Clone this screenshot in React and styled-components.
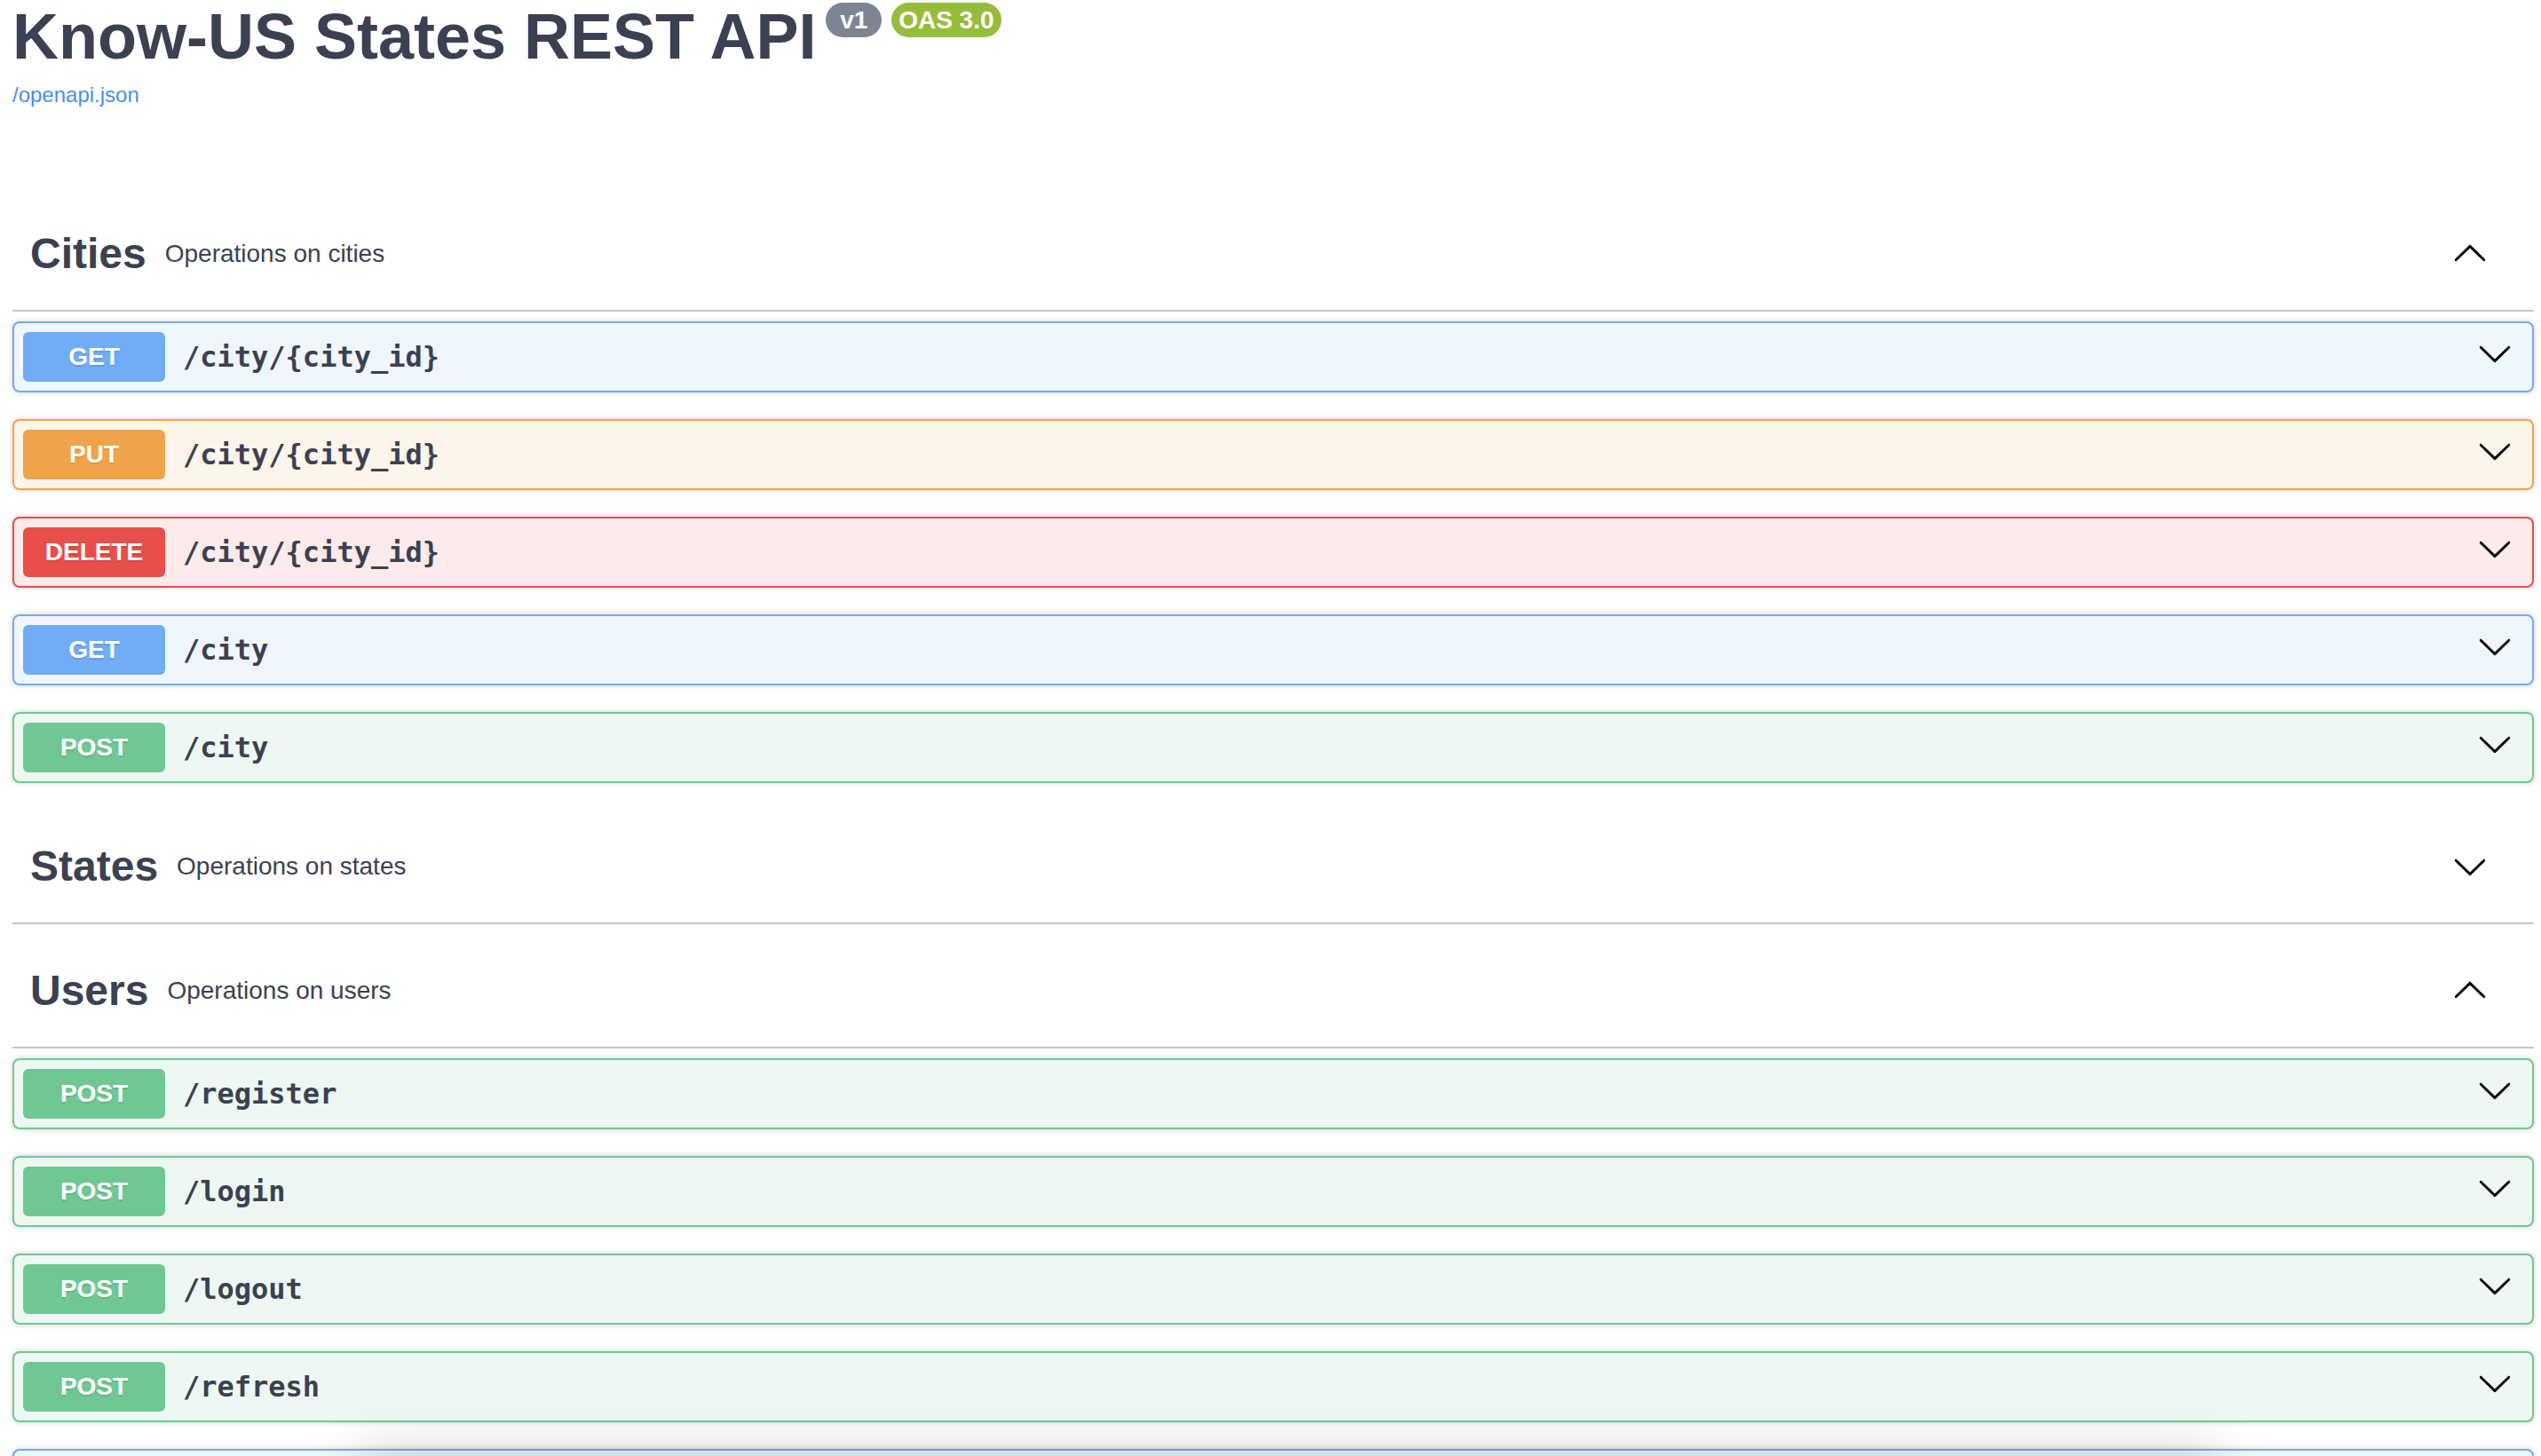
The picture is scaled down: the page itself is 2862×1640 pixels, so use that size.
import styled, { createGlobalStyle } from "styled-components";

const GlobalStyle = createGlobalStyle`
  html, body {
    margin: 0;
    padding: 0;
    background: #fff;
    font-family: "Liberation Sans", Arial, sans-serif;
    color: #3b4151;
  }
`;

const METHOD_COLORS = {
  GET: { main: "#71acf6", bg: "#eff6fe" },
  PUT: { main: "#f0a44a", bg: "#fdf4ea" },
  DELETE: { main: "#e74f4a", bg: "#fbebea" },
  POST: { main: "#6fc893", bg: "#eef8f2" },
};

const Wrapper = styled.div`
  padding: 0 8px 0 14px;
  width: 2840px;
`;

const Info = styled.div`
  margin-bottom: 101px;
`;

const TitleRow = styled.div`
  display: flex;
  align-items: flex-start;
`;

const Title = styled.h2`
  margin: 0;
  font-size: 72px;
  line-height: 82px;
  font-weight: 700;
  color: #3b4151;
`;

const Badge = styled.small`
  display: inline-block;
  margin: 3px 0 0 11px;
  padding: 4px 8px;
  border-radius: 57px;
  background: ${(p) => p.$bg};
  color: #fff;
  font-size: 28px;
  line-height: 31px;
  font-weight: 700;
  white-space: pre;
`;

const SpecLink = styled.a`
  display: block;
  margin-top: 11px;
  font-size: 24px;
  line-height: 28px;
  color: #4b8fe2;
  text-decoration: none;
`;

const TagHeader = styled.div`
  display: flex;
  align-items: center;
  box-sizing: border-box;
  height: 129px;
  padding: 0 52px 0 20px;
  margin-bottom: 11px;
  border-bottom: 2px solid rgba(59, 65, 81, 0.3);
`;

const TagName = styled.span`
  font-size: 48px;
  line-height: 48px;
  font-weight: 700;
  color: #3b4151;
`;

const TagDesc = styled.small`
  margin-left: 21px;
  font-size: 28px;
  line-height: 32px;
  color: #3b4151;
`;

const Chevron = styled.svg`
  width: 40px;
  height: 40px;
  flex: none;
  margin-left: auto;
  transform: ${(p) => (p.$up ? "rotate(180deg)" : "none")};
`;

const OpBlock = styled.div`
  display: flex;
  align-items: center;
  box-sizing: border-box;
  height: 80px;
  padding: 10px;
  margin-bottom: 30px;
  border: 2px solid ${(p) => METHOD_COLORS[p.$method].main};
  border-radius: 8px;
  background: ${(p) => METHOD_COLORS[p.$method].bg};
  box-shadow: 0 0 6px rgba(0, 0, 0, 0.19);
`;

const Method = styled.span`
  flex: none;
  width: 160px;
  height: 56px;
  line-height: 56px;
  border-radius: 6px;
  background: ${(p) => METHOD_COLORS[p.$method].main};
  color: #fff;
  font-size: 28px;
  font-weight: 700;
  text-align: center;
  text-shadow: 0 2px 0 rgba(0, 0, 0, 0.1);
`;

const Path = styled.span`
  padding: 0 20px;
  font-family: "DejaVu Sans Mono", "Liberation Mono", monospace;
  font-size: 32px;
  font-weight: 700;
  color: #3b4151;
`;

const OpChevron = styled(Chevron)`
  margin-right: 12px;
  margin-bottom: 9px;
`;

const BottomShade = styled.div`
  position: fixed;
  left: 430px;
  width: 2040px;
  top: 1662px;
  height: 120px;
  box-shadow: 0 0 60px 26px rgba(0, 0, 0, 0.18);
  background: #fff;
`;

const ARROW =
  "M17.418 6.109c.272-.268.709-.268.979 0s.271.701 0 .969l-7.908 7.83c-.27.268-.707.268-.979 0l-7.908-7.83c-.27-.268-.27-.701 0-.969.271-.268.709-.268.979 0L10 13.25l7.418-7.141z";

const sections = [
  {
    name: "Cities",
    desc: "Operations on cities",
    open: true,
    ops: [
      ["GET", "/city/{city_id}"],
      ["PUT", "/city/{city_id}"],
      ["DELETE", "/city/{city_id}"],
      ["GET", "/city"],
      ["POST", "/city"],
    ],
  },
  { name: "States", desc: "Operations on states", open: false, ops: [] },
  {
    name: "Users",
    desc: "Operations on users",
    open: true,
    ops: [
      ["POST", "/register"],
      ["POST", "/login"],
      ["POST", "/logout"],
      ["POST", "/refresh"],
      ["GET", "/user"],
    ],
  },
];

const Arrow = ({ as: Comp = Chevron, up }) => (
  <Comp $up={up} viewBox="0 0 20 20" aria-hidden="true">
    <path d={ARROW} fill="#000" />
  </Comp>
);

export default function App() {
  return (
    <>
      <GlobalStyle />
      <Wrapper>
        <Info>
          <TitleRow>
            <Title>Know-US States REST API</Title>
            <Badge $bg="#7d8492">{" v1 "}</Badge>
            <Badge $bg="#95bd3b">OAS 3.0</Badge>
          </TitleRow>
          <SpecLink href="#">/openapi.json</SpecLink>
        </Info>

        {sections.map((s) => (
          <section key={s.name}>
            <TagHeader>
              <TagName>{s.name}</TagName>
              <TagDesc>{s.desc}</TagDesc>
              <Arrow up={s.open} />
            </TagHeader>
            {s.ops.map(([method, path], i) => (
              <OpBlock key={i} $method={method}>
                <Method $method={method}>{method}</Method>
                <Path>{path}</Path>
                <Arrow as={OpChevron} />
              </OpBlock>
            ))}
          </section>
        ))}
      </Wrapper>
      <BottomShade />
    </>
  );
}
